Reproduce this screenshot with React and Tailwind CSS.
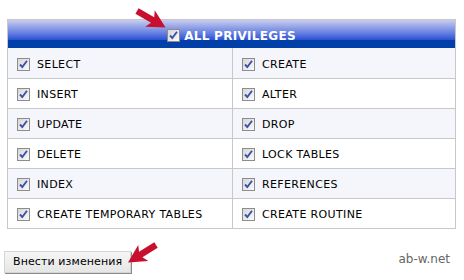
import React from 'react';

const rows = [
  ['SELECT', 'CREATE'],
  ['INSERT', 'ALTER'],
  ['UPDATE', 'DROP'],
  ['DELETE', 'LOCK TABLES'],
  ['INDEX', 'REFERENCES'],
  ['CREATE TEMPORARY TABLES', 'CREATE ROUTINE'],
];

function Check() {
  return (
    <span className="inline-flex w-[13px] h-[13px] shrink-0 border border-[#8c8c8c] bg-[linear-gradient(135deg,#d6d6d6,#fbfbfb)] items-center justify-center">
      <svg width="9" height="9" viewBox="0 0 9 9">
        <path d="M1 4.5 L3.3 7 L8 0.8" fill="none" stroke="#3a52a8" strokeWidth="1.9" />
      </svg>
    </span>
  );
}

// red pointer arrow, drawn along +x then rotated into place
function Arrow({ x, y, angle }) {
  return (
    <svg className="absolute left-0 top-0 overflow-visible" width="1" height="1">
      <g transform={`translate(${x} ${y}) rotate(${angle})`}>
        <path d="M0 -3.2 L18 -3.2 L15 -9.5 L33 0 L15 9.5 L18 3.2 L0 3.2 Z" fill="#c8102e" />
      </g>
    </svg>
  );
}

export default function App() {
  return (
    <div className="relative w-[464px] h-[280px] bg-white pt-[19px]" style={{ fontFamily: '"DejaVu Sans", Verdana, sans-serif' }}>
      <div className="ml-[7px] w-[449px] border border-[#c8c8c8]">
        <div className="h-[28px] flex items-center justify-center gap-[4px] pt-[3px] bg-[linear-gradient(to_bottom,#c8cdee_0%,#6a82e2_45%,#2a4fd4_72%,#0040a8_73%,#0040a8_100%)]">
          <Check />
          <span className="text-white font-bold text-[12px] tracking-[0.3px]">ALL PRIVILEGES</span>
        </div>
        {rows.map((r, i) => (
          <div
            key={i}
            className={`grid grid-cols-[225px_1fr] h-[30px] ${i > 0 ? 'border-t border-[#c8c8c8]' : ''} ${i % 2 === 0 ? 'bg-[#f4f6fc]' : 'bg-white'}`}
          >
            {r.map((t, j) => (
              <div
                key={t}
                className={`flex items-center gap-[7px] pt-[2px] ${j === 0 ? 'pl-[9px] border-r border-[#c8c8c8]' : 'pl-[9px]'}`}
              >
                <Check />
                <span className="text-[11px] text-black tracking-[0.35px] pt-[2px]">{t}</span>
              </div>
            ))}
          </div>
        ))}
      </div>
      <div className="flex items-center justify-between mt-[22px] pl-[4px] pr-[14px]">
        <button className="h-[22px] px-[8px] text-[11px] text-black tracking-[0.1px] bg-[linear-gradient(to_bottom,#f6f6f6,#e6e6e6)] border border-[#d4d4d4] shadow-[1px_1px_0_#8a8a8a]">
          Внести изменения
        </button>
        <span className="text-[12px] text-[#666] -mt-[6px]">ab-w.net</span>
      </div>
      <Arrow x={137} y={11} angle={30} />
      <Arrow x={156} y={245} angle={148} />
    </div>
  );
}
